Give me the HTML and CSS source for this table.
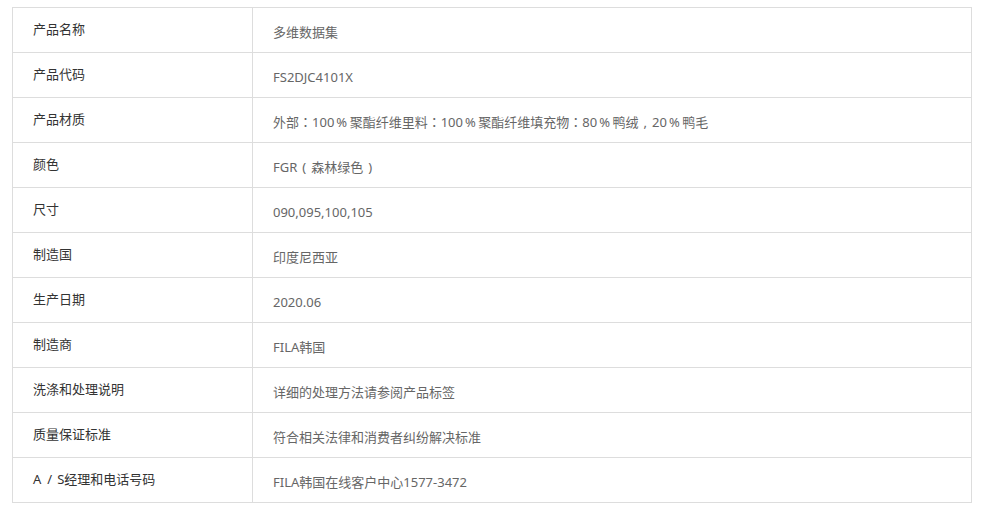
FILE: index.html
```html
<!DOCTYPE html>
<html lang="zh-CN">
<head>
  <meta charset="UTF-8" />
  <meta name="viewport" content="width=device-width, initial-scale=1.0"/>
  <title>产品信息</title>
  <link rel="stylesheet" href="styles.css">
</head>
<body>

<div class="wrap">
  <table class="spec">
    <tr><th>产品名称</th><td>多维数据集</td></tr>
    <tr><th>产品代码</th><td>FS2DJC4101X</td></tr>
    <tr><th>产品材质</th><td>外部<span class="punct" lang="zh-Hant">：</span>100<span class="pct">%</span>聚酯纤维里料<span class="punct" lang="zh-Hant">：</span>100<span class="pct">%</span>聚酯纤维填充物<span class="punct" lang="zh-Hant">：</span>80<span class="pct">%</span>鸭绒<span class="comma">,</span>20<span class="pct">%</span>鸭毛</td></tr>
    <tr><th>颜色</th><td>FGR<span class="paren">(</span>森林绿色<span class="paren">)</span></td></tr>
    <tr><th>尺寸</th><td>090,095,100,105</td></tr>
    <tr><th>制造国</th><td>印度尼西亚</td></tr>
    <tr><th>生产日期</th><td>2020.06</td></tr>
    <tr><th>制造商</th><td>FILA韩国</td></tr>
    <tr><th>洗涤和处理说明</th><td>详细的处理方法请参阅产品标签</td></tr>
    <tr><th>质量保证标准</th><td>符合相关法律和消费者纠纷解决标准</td></tr>
    <tr><th>A<span class="slash">/</span>S经理和电话号码</th><td>FILA韩国在线客户中心1577-3472</td></tr>
  </table>
</div>

</body>
</html>
```

FILE: styles.css
```css
body {
  margin: 0;
  padding: 0;
  background: #fff;
  font-family: "Noto Sans", "Noto Sans CJK SC", sans-serif;
  font-size: 13px;
  text-spacing-trim: space-all;
}

.wrap {
  padding: 7px 12px;
}

.spec {
  width: 960px;
  border-collapse: collapse;
  table-layout: fixed;
}

.spec th,
.spec td {
  border: 1px solid #dddddd;
  height: 44px;
  box-sizing: border-box;
  line-height: 20px;
  text-align: left;
  font-weight: normal;
  vertical-align: top;
}

.spec th {
  width: 240px;
  color: #333;
  padding: 11px 20px 13px 20px;
}

.spec td {
  color: #666;
  padding: 14px 20px 10px 20px;
}

/* full-width punctuation sits centred, as in the source page */
.punct {
  font-family: "Noto Sans CJK TC", sans-serif;
  font-variant-east-asian: full-width;
}

.pct {
  padding: 0 2.5px 0 2px;
}

.comma {
  padding: 0 5px;
}

.paren {
  padding: 0 5px;
}

.slash {
  padding: 0 5px 0 6px;
}
```
